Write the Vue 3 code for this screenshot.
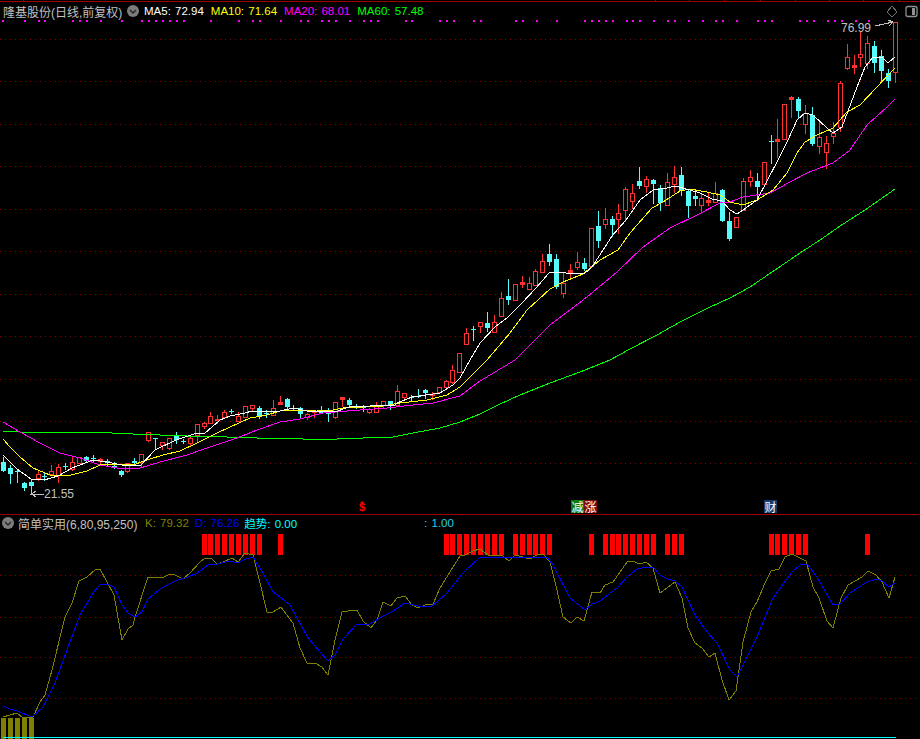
<script setup>
const X = i => Math.floor(1.5 + 6.915 * i)
const raw = `c457 462 471 471|c465 468 474 483|c469 471 472 482|c482 483 488 490|c480 482 486 493|r470 474 478 480|c472 476 477 480|r465 471 474 475|r464 467 475 482|c463 466 467 469|r457 462 469 470|r457 457 463 463|c456 457 461 462|c455 458 459 462|r458 459 461 463|c459 461 463 465|c462 466 467 468|c470 471 475 476|r463 463 471 472|c458 461 463 464|r454 454 462 466|r432 432 440 441|c438 438 439 448|r442 442 445 449|r438 438 448 449|c432 436 440 443|c439 441 442 443|r437 438 443 445|r424 424 435 442|r422 423 426 428|r412 416 423 423|r415 419 420 423|r410 412 417 418|c409 411 412 413|r412 416 421 421|r406 406 417 417|r405 405 408 411|c406 408 417 418|c410 413 414 417|r400 408 415 415|r396 402 404 404|c398 399 407 408|c405 408 409 410|c407 408 414 417|r413 414 417 419|r411 411 412 417|c406 412 413 413|c408 413 414 421|r402 402 417 418|r397 397 399 406|c398 400 405 406|c404 406 407 408|c405 406 408 411|r408 409 412 413|r402 406 412 412|r401 401 405 407|c401 401 405 409|r385 391 405 405|r393 393 397 399|c395 397 398 401|c389 396 397 397|c389 390 393 398|r392 394 395 399|r387 387 392 393|r380 381 387 388|r365 370 382 383|r353 353 372 372|r328 333 344 344|c326 329 330 340|r322 322 326 332|c312 323 328 331|r315 322 332 332|r292 298 316 316|c279 296 300 304|r284 284 300 300|r276 282 284 287|r277 283 289 289|r269 271 285 285|r254 261 272 272|c244 254 262 265|c254 259 287 288|r272 283 293 297|r264 270 272 277|r252 262 267 269|c258 263 269 270|r228 228 266 266|c211 226 241 247|r208 219 224 228|c216 219 225 236|r204 213 219 233|r187 189 210 221|r184 193 201 208|c167 181 186 188|r176 179 186 192|c179 180 184 203|c185 188 203 210|r173 182 205 205|r166 177 184 192|c167 175 191 195|c190 191 206 217|c190 196 199 205|r193 198 205 211|r193 200 202 205|r182 193 202 202|c189 190 221 221|c212 221 239 240|r217 217 227 227|r178 181 210 210|r170 177 181 186|c173 181 187 200|r162 162 184 184|c135 141 142 163|r119 139 141 157|r104 104 139 139|r96 97 99 117|c97 99 111 117|r105 113 124 133|c107 115 144 145|r120 137 146 153|r136 143 152 168|r122 133 136 143|r81 83 127 131|r44 57 68 69|r55 65 67 73|r32 54 57 66|r36 43 63 68|c41 46 63 72|c50 56 71 81|c69 73 81 87|r22 22 72 82`
const candles = raw.split('|').map((s, i) => {
  const [hi, top, bot, lo] = s.slice(1).split(' ').map(Number)
  return { i, red: s[0] === 'r', x: X(i), hi, top, bot, lo }
})

const pts = a => a.map(p => p.join(',')).join(' ')
const ma5 = pts([[3,455],[10,462],[17,469],[31,479],[44,480],[58,476],[72,468],[93,460],[107,462],[127,466],[141,465],[155,450],[176,440],[197,433],[204,434],[220,420],[230,416],[245,413],[252,411],[266,411],[280,411],[293,408],[307,411],[335,412],[349,407],[370,406],[395,405],[397,403],[412,397],[440,393],[453,385],[460,378],[470,360],[480,343],[495,327],[508,317],[522,303],[536,288],[549,273],[556,272],[575,274],[585,273],[592,267],[605,247],[612,236],[626,220],[640,200],[653,190],[667,188],[675,186],[690,190],[700,193],[712,199],[722,201],[730,210],[737,214],[743,210],[757,200],[778,160],[788,140],[797,120],[805,113],[813,115],[827,128],[833,133],[842,127],[857,87],[865,67],[873,57],[882,57],[888,63],[895,57]])
const ma10 = pts([[3,439],[10,447],[20,457],[33,468],[50,475],[67,476],[87,471],[100,465],[113,464],[133,465],[147,460],[163,455],[180,451],[197,443],[217,433],[250,418],[267,415],[280,411],[317,410],[333,410],[343,408],[383,406],[400,403],[427,400],[447,395],[460,387],[487,360],[510,333],[527,310],[550,289],[563,282],[583,274],[600,260],[618,250],[630,233],[652,208],[663,202],[680,191],[690,189],[707,192],[720,195],[730,202],[743,205],[757,200],[773,190],[787,173],[797,153],[805,142],[817,135],[833,128],[847,112],[860,105],[877,87],[890,73],[895,68]])
const ma20 = pts([[3,422],[20,432],[40,443],[60,453],[80,458],[100,465],[117,468],[137,469],[160,462],[187,455],[207,448],[237,438],[257,430],[280,422],[300,419],[323,413],[347,411],[387,408],[413,405],[433,403],[460,396],[480,381],[515,360],[550,325],[587,297],[617,272],[643,247],[670,228],[697,215],[720,203],[730,202],[743,197],[770,193],[790,182],[807,173],[833,163],[850,150],[867,125],[887,107],[895,99]])
const ma60 = pts([[3,431],[20,432],[43,432],[90,432],[133,434],[187,436],[227,437],[257,438],[290,438],[303,439],[337,439],[363,438],[393,437],[413,433],[440,428],[460,422],[480,414],[500,404],[520,395],[550,383],[580,372],[610,360],[630,349],[657,335],[680,322],[710,307],[730,298],[750,287],[775,270],[800,253],[820,240],[840,226],[865,210],[895,189]])
const kLine = pts([[3,717],[17,713],[23,718],[33,717],[40,702],[45,695],[52,670],[65,617],[72,603],[79,581],[87,577],[95,570],[100,569],[107,582],[114,595],[122,640],[128,629],[133,625],[135,617],[148,577],[155,577],[162,578],[170,574],[175,575],[183,579],[190,573],[200,562],[205,558],[212,559],[217,564],[223,562],[232,558],[238,562],[245,553],[253,555],[260,583],[267,612],[273,612],[281,607],[293,623],[300,648],[307,663],[315,663],[322,667],[328,675],[335,640],[342,612],[348,611],[357,610],[363,621],[371,628],[377,620],[383,602],[391,606],[397,598],[405,596],[412,605],[418,608],[425,605],[433,604],[440,588],[453,567],[460,556],[465,555],[473,551],[480,549],[488,555],[502,555],[509,561],[515,555],[523,557],[530,559],[537,555],[543,554],[550,562],[557,590],[563,617],[571,623],[577,617],[584,621],[592,592],[600,593],[605,585],[613,582],[627,562],[632,561],[640,564],[646,562],[653,568],[660,593],[675,582],[682,598],[688,628],[695,643],[702,648],[709,657],[715,653],[722,680],[729,700],[736,691],[743,642],[751,612],[757,602],[765,583],[771,571],[779,569],[785,557],[792,554],[798,557],[806,561],[813,587],[819,598],[827,621],[833,628],[841,598],[848,585],[855,581],[862,577],[868,571],[876,575],[882,582],[889,598],[895,577]])
const dLine = pts([[3,706],[10,709],[17,711],[32,717],[43,707],[55,683],[67,650],[80,615],[93,593],[100,585],[107,584],[114,587],[122,605],[128,613],[135,617],[142,612],[148,599],[160,589],[175,581],[188,577],[197,573],[208,565],[217,564],[230,561],[238,563],[243,560],[253,557],[263,573],[273,592],[280,597],[290,605],[297,618],[307,636],[313,644],[328,661],[335,655],[343,639],[357,624],[370,624],[385,615],[393,611],[405,603],[417,606],[432,606],[438,601],[447,593],[463,573],[480,557],[503,557],[530,558],[535,557],[547,557],[553,565],[570,598],[585,610],[592,604],[600,601],[618,587],[627,577],[637,569],[647,567],[653,567],[660,575],[668,579],[675,581],[682,587],[695,615],[707,632],[717,643],[730,670],[737,677],[757,637],[773,598],[792,572],[800,565],[807,564],[817,577],[833,605],[840,604],[850,593],[867,582],[877,579],[882,581],[889,587],[895,583]])

const dots = [2,24,38,44,72,79,86,100,121,141,148,155,162,169,176,183,210,238,252,259,280,300,307,321,328,335,349,363,370,377,405,411,439,446,453,473,480,515,522,536,556,584,591,598,605,612,626,632,639,653,667,674,688,702,715,722,736,757,764,771,799,806,813,827,834,841,855,868,889]
const ticks = [23,655,689,724,760,795,829,863,899]
const grid1 = [39,81,124,166,209,251,294,336,379,421,463]
const grid2 = [575,617,657,698]
const signal = [29,30,31,32,33,34,35,36,37,40,64,65,66,67,68,69,70,71,72,74,75,76,77,78,79,85,87,88,89,90,91,92,93,94,96,97,98,111,112,113,114,115,116,125]
const olive = [1,8,15,22,29]
const mas = [
  { label: 'MA5: 72.94', cls: 'white' },
  { label: 'MA10: 71.64', cls: 'yellow' },
  { label: 'MA20: 68.01', cls: 'magenta' },
  { label: 'MA60: 57.48', cls: 'green' }
]
</script>

<template>
  <div class="screen">
    <section class="pane main">
      <svg class="canvas" viewBox="0 0 920 514" width="920" height="514">
        <g class="crisp">
          <rect x="0" y="1" width="920" height="1" fill="#a00000" />
          <rect v-for="t in ticks" :key="t" :x="t" y="0" width="1" height="2" fill="#a00000" />
          <line v-for="y in grid1" :key="y" x1="0" x2="920" :y1="y + 0.5" :y2="y + 0.5" class="grid" />
          <rect v-for="d in dots" :key="d" :x="d" y="20" width="2" height="2" fill="#ff00ff" />
          <g v-for="c in candles" :key="c.i">
            <template v-if="c.red">
              <rect :x="c.x + 2" :y="c.hi" width="1" :height="c.lo - c.hi + 1" fill="#ff3232" />
              <rect v-if="c.bot - c.top > 2" :x="c.x + 0.5" :y="c.top + 0.5" width="4" :height="c.bot - c.top" fill="#000" stroke="#ff3232" />
              <rect v-else :x="c.x" :y="c.top" width="5" :height="c.bot - c.top + 1" fill="#ff3232" />
            </template>
            <template v-else>
              <rect :x="c.x + 2" :y="c.hi" width="1" :height="c.lo - c.hi + 1" fill="#54fcfc" />
              <rect :x="c.x" :y="c.top" width="5" :height="c.bot - c.top" fill="#54fcfc" />
            </template>
          </g>
          <polyline :points="ma60" class="line" stroke="#00ff00" />
          <polyline :points="ma20" class="line" stroke="#ff00ff" />
          <polyline :points="ma10" class="line" stroke="#ffff00" />
          <polyline :points="ma5" class="line" stroke="#ffffff" />
          <polyline points="44,494 32,494 36,491" class="line" stroke="#c0c0c0" />
          <polyline points="36,497 32,494" class="line" stroke="#c0c0c0" />
          <polyline points="875,26 893,22" class="line" stroke="#c0c0c0" />
          <polyline points="888,20 893,22 889,26" class="line" stroke="#c0c0c0" />
          <polyline points="892,6 897,12 892,17 887,12 892,6" class="line" stroke="#707070" />
        </g>
        <rect x="906" y="6.5" width="11" height="10" rx="2" fill="none" stroke="#909090" stroke-width="1.3" />
        <rect x="912" y="8" width="3" height="7" fill="#909090" />
      </svg>
      <div class="legend top">
        <span class="title">隆基股份(日线,前复权)</span>
        <span class="chev"><svg viewBox="0 0 12 12" width="12" height="12"><circle cx="6" cy="6" r="6" fill="#7c7c7c" /><path d="M3 5 L6 8 L9 5" fill="none" stroke="#222" stroke-width="1.3" /></svg></span>
        <span v-for="m in mas" :key="m.label" class="ma" :class="m.cls">{{ m.label }}</span>
      </div>
      <span class="price low">21.55</span>
      <span class="price high">76.99</span>
      <span class="dollar"><i></i>$</span>
      <span class="tag jian">减</span>
      <span class="tag zhang">涨</span>
      <span class="tag cai">财</span>
    </section>
    <section class="pane sub">
      <svg class="canvas" viewBox="0 515 920 224" width="920" height="224">
        <g class="crisp">
          <line v-for="y in grid2" :key="y" x1="0" x2="920" :y1="y + 0.5" :y2="y + 0.5" class="grid" />
          <rect v-for="s in signal" :key="s" :x="X(s)" y="534" width="5" height="21" fill="#ff0000" />
          <rect v-for="o in olive" :key="o" :x="o" y="718" width="5" height="21" fill="#808000" />
          <polyline :points="kLine" class="line" stroke="#808000" />
          <polyline :points="dLine" class="line" stroke="#0000ff" />
          <rect x="3" y="737" width="893" height="1" fill="#00ffff" />
        </g>
      </svg>
      <div class="legend bottom">
        <span class="chev"><svg viewBox="0 0 12 12" width="12" height="12"><circle cx="6" cy="6" r="6" fill="#7c7c7c" /><path d="M3 5 L6 8 L9 5" fill="none" stroke="#222" stroke-width="1.3" /></svg></span>
        <span class="title name">简单实用(6,80,95,250)</span>
        <span class="ma olive">K: 79.32</span>
        <span class="ma blue">D: 76.26</span>
        <span class="ma cyan">趋势: 0.00</span>
        <span class="ma cyan2">: 1.00</span>
      </div>
    </section>
  </div>
</template>

<style>
html, body { margin: 0; background: #000; overflow: hidden; }
</style>

<style scoped>
.screen { width: 920px; height: 739px; background: #000; display: flex; flex-direction: column; overflow: hidden; font-family: "Liberation Sans", "Noto Sans CJK SC", sans-serif; }
.pane { position: relative; }
.main { height: 514px; border-bottom: 1px solid #a00000; }
.sub { flex: 1; }
.canvas { display: block; }
.crisp { shape-rendering: crispEdges; }
.grid { stroke: #8a0000; stroke-width: 1; stroke-dasharray: 1 4; }
.line { fill: none; stroke-width: 1; }
.legend { position: absolute; left: 0; display: flex; align-items: center; height: 16px; white-space: nowrap; }
.legend.top { top: 3px; padding-left: 3px; }
.legend.bottom { top: 0; padding-left: 2px; }
.title { font-size: 12px; color: #c0c0c0; width: 124px; }
.title.name { margin-left: 4px; width: 121px; }
.chev { width: 12px; height: 12px; display: block; }
.chev svg { display: block; }
.ma { font-size: 11.5px; margin-left: 6px; word-spacing: 1px; }
.top .chev { margin-right: 5px; }
.top .ma { margin-left: 0; margin-right: 7px; }
.white { color: #fff; }
.yellow { color: #ff0; }
.magenta { color: #f0f; }
.green { color: #0f0; }
.olive { color: #808000; }
.blue { color: #0000ff; }
.cyan { color: #0ff; margin-left: 5px; }
.cyan2 { color: #26d0e0; margin-left: 127px; }
.price { position: absolute; font-size: 12px; color: #c0c0c0; line-height: 14px; }
.low { left: 44px; top: 487px; }
.high { left: 841px; top: 21px; }
.dollar { position: absolute; left: 359px; top: 501px; color: #ff0000; font: bold 11px/13px "Liberation Sans", sans-serif; }
.dollar i { position: absolute; left: 1px; top: 0; width: 0; height: 0; border: 2px solid transparent; border-top: 0; border-bottom: 2px solid #ff0000; }
.tag { position: absolute; top: 500px; width: 13px; height: 13px; font: 12px/13px "Noto Sans CJK SC", sans-serif; color: #fff; text-align: center; }
.jian { left: 571px; background: #107810; }
.zhang { left: 584px; background: #7c0c0c; }
.cai { left: 764px; background: #123c6e; }
</style>
